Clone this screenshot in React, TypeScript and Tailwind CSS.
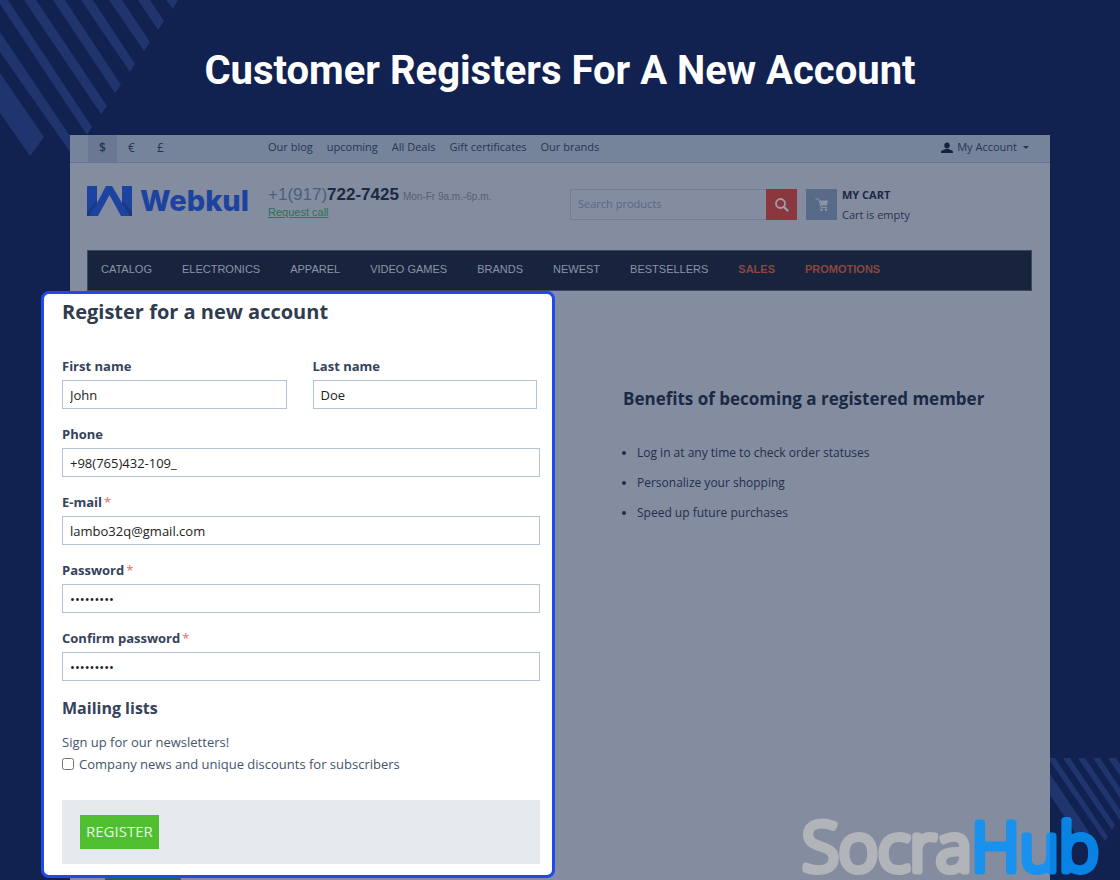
import type { InputHTMLAttributes } from 'react';

const currencies = ['$', '€', '£'];
const quickLinks = ['Our blog', 'upcoming', 'All Deals', 'Gift certificates', 'Our brands'];

const navItems = [
  { label: 'CATALOG' },
  { label: 'ELECTRONICS' },
  { label: 'APPAREL' },
  { label: 'VIDEO GAMES' },
  { label: 'BRANDS' },
  { label: 'NEWEST' },
  { label: 'BESTSELLERS' },
  { label: 'SALES', hot: true },
  { label: 'PROMOTIONS', hot: true },
];

const benefits = [
  'Log in at any time to check order statuses',
  'Personalize your shopping',
  'Speed up future purchases',
];

const topStripes = [
  '0,73 44,137 30,156 0,113',
  '0,32 78,148 73,156 0,52',
  '0,0 8,0 92,127 87,135 0,4',
  '24,0 36,0 107,106 101,114',
  '53,0 65,0 121,85 115,93',
  '81,0 93,0 135,64 130,72',
  '109,0 122,0 150,42 144,51',
  '138,0 150,0 164,21 158,30',
  '166,0 178,0 173,9',
];

const bottomStripes = [
  '0,16 39,74 32,85 0,37',
  '0,0 5,0 58,79 55,83 0,3',
  '13,0 20,0 65,67 62,72',
  '28,0 35,0 70,52 70,62',
  '43,0 50,0 70,30 70,40',
  '58,0 66,0 70,6 70,18',
];

interface FieldProps extends InputHTMLAttributes<HTMLInputElement> {
  id: string;
  label: string;
}

const Field = ({ id, label, required, ...props }: FieldProps) => (
  <div className="min-w-0">
    <label htmlFor={id} className="mb-[5px] block text-[13px] leading-[18px] font-bold text-[#34435a]">
      {label}
      {required && <span className="ml-0.5 font-semibold text-[#e58a78]">*</span>}
    </label>
    <input
      id={id}
      className="block h-[29px] w-full border border-[#b4c3d3] bg-white px-[7px] text-[13px] text-[#222]"
      {...props}
    />
  </div>
);

const TopBar = () => (
  <div className="grid h-7 grid-cols-[180px_1fr_auto] items-center border-b border-[#627797] bg-[#76849b] pr-[21px] pl-[18px] text-[11px] text-[#243653]">
    <div className="flex h-full text-xs">
      {currencies.map((c, i) => (
        <button key={c} className={i === 0 ? 'w-[29px] bg-[#6b7894] pb-0.5 font-semibold' : 'w-[29px] pb-0.5'}>
          {c}
        </button>
      ))}
    </div>
    <div className="flex gap-3.5 pb-0.5">
      {quickLinks.map((link) => (
        <a key={link} href="#">{link}</a>
      ))}
    </div>
    <button className="flex items-center gap-1 pb-0.5">
      <svg width="12" height="12" viewBox="0 0 12 12" fill="#16233f">
        <ellipse cx="6" cy="3.600" rx="2.700" ry="3" />
        <path d="M0 11V9.800C0 8.200 2.500 8 4.600 7h2.800C9.500 8 12 8.200 12 9.800V11z" />
      </svg>
      My Account
      <svg width="6" height="4" viewBox="0 0 6 4" fill="currentColor" className="ml-0.5">
        <path d="M0 0h6L3 3z" />
      </svg>
    </button>
  </div>
);

const Header = () => (
  <header className="grid h-[87px] grid-cols-[181px_302px_1fr] items-start pt-[22px] pl-[17px]">
    <a href="#" className="flex h-8 items-center gap-2 font-[Inter,sans-serif] text-[29px] leading-8 font-extrabold text-[#1c439f]">
      <svg width="45" height="30" viewBox="0 0 45 30">
        <path d="M0 0h10v17L19 0h6l10 17V0h10v30H34L22.500 9 11 30H0z" fill="#1c439f" />
        <path d="M0 30v-4l10-12v3L2 30zM45 30v-4L35 14v3l8 13z" fill="#1a3780" />
      </svg>
      Webkul
    </a>
    <div className="font-['Liberation_Sans',sans-serif]">
      <p className="pt-px text-[17px] leading-[18px] whitespace-nowrap text-[#4a5f80]">
        +1(917)<b className="text-[#1a2945]">722-7425</b>
        <span className="ml-1 text-[10px] text-[#556178]">Mon-Fr 9a.m.-6p.m.</span>
      </p>
      <a href="#" className="block text-[11px] leading-3 text-[#2b7256] underline">Request call</a>
    </div>
    <div className="flex">
      <form className="mt-1 flex h-[31px]">
        <input
          type="search"
          aria-label="Search products"
          placeholder="Search products"
          className="w-[196px] border border-r-0 border-[#727e94] px-[7px] text-[11px] placeholder:text-[#566986]"
        />
        <button type="button" aria-label="Search" className="flex w-[31px] items-center justify-center bg-[#8a383e]">
          <svg width="14" height="14" viewBox="0 0 14 14" fill="none" stroke="#99a0ad" strokeWidth="1.8">
            <circle cx="5.500" cy="5.500" r="4.500" />
            <path d="M9 9l3.500 3.500" strokeWidth="2.400" strokeLinecap="round" />
          </svg>
        </button>
      </form>
      <button aria-label="Cart" className="mt-1 ml-[9px] flex size-[31px] items-center justify-center bg-[#576a87]">
        <svg width="14" height="14" viewBox="0 0 14 14" fill="#8b95a6">
          <path d="M.5 1h3l2.700 8.500H12" fill="none" stroke="#8b95a6" />
          <path d="M4.600 2.500H13L12 7.500H6z" />
          <circle cx="6.500" cy="11.800" r="1.200" />
          <circle cx="11" cy="11.800" r="1.200" />
        </svg>
      </button>
      <p className="ml-[5px] text-[11px] leading-5 text-[#243653]">
        <b className="text-[#1a2945]">MY CART</b>
        <br />
        Cart is empty
      </p>
    </div>
  </header>
);

const RegisterForm = () => (
  <form className="rounded-lg border-3 border-[#1f48ee] bg-white pt-1 pr-3 pb-[11px] pl-[18px]">
    <h2 className="mb-[31px] text-xl leading-7 font-bold text-[#2f3b4e]">Register for a new account</h2>
    <div className="space-y-4">
      <div className="grid grid-cols-2 gap-[26px] pr-[3px]">
        <Field id="first" label="First name" defaultValue="John" />
        <Field id="last" label="Last name" defaultValue="Doe" />
      </div>
      <Field id="phone" label="Phone" type="tel" defaultValue="+98(765)432-109_" />
      <Field id="email" label="E-mail" type="email" required defaultValue="lambo32q@gmail.com" />
      <Field id="password" label="Password" type="password" required defaultValue="lambo3210" />
      <Field id="confirm" label="Confirm password" type="password" required defaultValue="lambo3210" />
    </div>
    <h3 className="mt-[15px] mb-[11px] text-base leading-6 font-bold text-[#34435a]">Mailing lists</h3>
    <div className="text-[13px] leading-[22px] text-[#44546a]">
      <p>Sign up for our newsletters!</p>
      <label className="flex items-center gap-[5px]">
        <input type="checkbox" className="size-3" />
        Company news and unique discounts for subscribers
      </label>
    </div>
    <div className="mt-[25px] bg-[#e5eaee] px-[18px] py-[15px]">
      <button type="button" className="block h-[34px] bg-[#4fbf31] px-1.5 pb-0.5 text-[15px] text-[#e6f6e0]">
        REGISTER
      </button>
    </div>
  </form>
);

const Stripes = ({ shapes }: { shapes: string[] }) => (
  <>
    {shapes.map((points) => (
      <polygon key={points} points={points} fill="#20356e" />
    ))}
  </>
);

export default function App() {
  return (
    <div className="relative flex min-h-screen flex-col bg-[#112150] font-['Open_Sans',sans-serif]">
      <svg className="absolute top-0 left-0" width="180" height="160">
        <Stripes shapes={topStripes} />
      </svg>
      <svg className="absolute right-0 bottom-0" width="70" height="122">
        <Stripes shapes={bottomStripes} />
      </svg>

      <h1 className="pt-[47px] pb-10 text-center font-[Roboto,sans-serif] text-[40px] leading-12 font-bold text-white">
        Customer Registers For A New Account
      </h1>

      <div className="relative mx-[70px] flex-1 bg-[#848c9f]">
        <TopBar />
        <Header />
        <nav className="mr-[18px] ml-[17px] flex h-[41px] items-center gap-[30px] border border-[#3b475d] bg-[#18243e] px-[13px] pb-0.5 font-['Liberation_Sans',sans-serif] text-[11px] whitespace-nowrap text-[#8b93a5]">
          {navItems.map((item) => (
            <a key={item.label} href="#" className={item.hot ? 'font-bold text-[#8b473c]' : ''}>
              {item.label}
            </a>
          ))}
        </nav>
        <main className="-ml-[29px] grid grid-cols-[514fr_495fr]">
          <RegisterForm />
          <section className="pt-24 pl-[68px] text-[#1f2f4d]">
            <h2 className="mb-[27px] text-[17px] leading-6 font-bold text-[#1a2945]">
              Benefits of becoming a registered member
            </h2>
            <ul className="list-disc pl-[14px] text-xs leading-[30px]">
              {benefits.map((text) => (
                <li key={text}>{text}</li>
              ))}
            </ul>
          </section>
        </main>
        <div className="ml-[35px] h-0.5 w-[76px] bg-[#226448]" />
      </div>

      {/* Brand mark over the page corner */}
      <svg className="absolute right-4 bottom-0 opacity-85" width="312" height="80" role="img" aria-label="SocraHub">
        <text
          x="307"
          y="71"
          textAnchor="end"
          className="font-['Open_Sans',sans-serif] text-[67px] font-light"
          strokeWidth="7"
          strokeLinejoin="round"
          strokeLinecap="round"
        >
          <tspan fill="#babbbe" stroke="#babbbe">Socra</tspan>
          <tspan fill="#0793fd" stroke="#0793fd">Hub</tspan>
        </text>
      </svg>
    </div>
  );
}
